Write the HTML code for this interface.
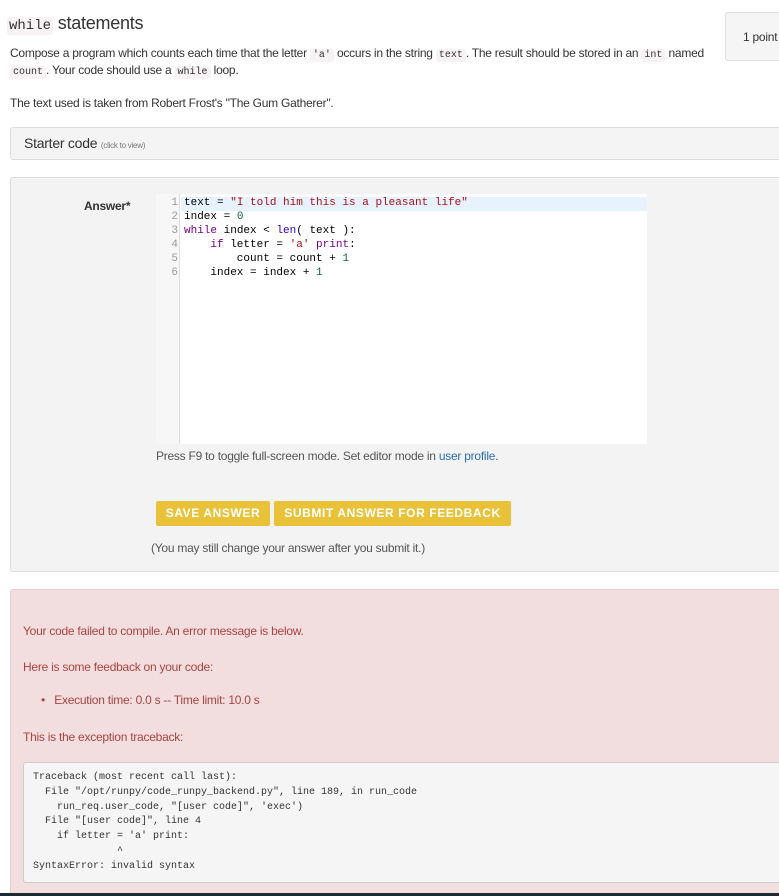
<!DOCTYPE html>
<html><head><style>
*{margin:0;padding:0;box-sizing:border-box}
html,body{width:779px;height:896px;overflow:hidden}
body{background:#fff;font-family:"Liberation Sans",sans-serif;font-size:12px;color:#333;position:relative;letter-spacing:-0.25px}
.a{position:absolute;white-space:nowrap}
code{font-family:"Liberation Mono",monospace;font-size:10px;background:#f7f2f4;color:#333;padding:1px 3px;border-radius:3px;letter-spacing:0}
.mono{font-family:"Liberation Mono",monospace;letter-spacing:0}
.ln{position:absolute;left:0;width:22px;text-align:right;color:#999}
.cl{position:absolute;left:28px;color:#000;white-space:pre}
.kw{color:#708}.st{color:#a11}.nu{color:#164}.bi{color:#30a}
.btn{position:absolute;top:501px;height:25px;background:#e9c23a;color:#fff;font-weight:bold;font-size:12px;letter-spacing:.6px;line-height:25px;text-align:center;border-radius:2px}
.tb div{height:14.8px;white-space:pre}
</style></head><body>
<div class="a" style="left:7px;top:13px;font-size:18px;color:#333"><span class="mono" style="font-size:14px;background:#f7f2f4;padding:1px 2px;border-radius:3px">while</span> statements</div>
<div class="a" style="left:725px;top:12px;width:60px;height:49px;background:#f5f5f5;border:1px solid #ddd;border-radius:3px;padding:17px 0 0 17px;font-size:12px">1 point</div>
<div class="a" style="left:10px;top:46px">Compose a program which counts each time that the letter <code>'a'</code> occurs in the string <code>text</code>. The result should be stored in an <code>int</code> named</div>
<div class="a" style="left:10px;top:63px"><code>count</code>. Your code should use a <code>while</code> loop.</div>
<div class="a" style="left:10px;top:96px">The text used is taken from Robert Frost's "The Gum Gatherer".</div>
<div class="a" style="left:10px;top:127px;width:780px;height:33px;background:#f4f4f4;border:1px solid #ddd;border-radius:3px"></div>
<div class="a" style="left:24px;top:135px;font-size:14px">Starter code <span style="font-size:8px;color:#777">(click to view)</span></div>

<div class="a" style="left:10px;top:177px;width:780px;height:395px;background:#f3f3f3;border:1px solid #ddd;border-radius:3px"></div>
<div class="a" style="left:84px;top:199px;font-weight:bold">Answer*</div>
<div class="a mono" style="left:156px;top:194px;width:491px;height:250px;background:#fff;font-size:11px">
<div class="a" style="left:0;top:0;width:24px;height:250px;background:#f7f7f7;border-right:1px solid #ddd"></div>
<div class="a" style="left:25px;top:3px;width:466px;height:14px;background:#e8f2fe"></div>
<div class="ln" style="top:3px">1</div><div class="cl" style="top:3px">text = <span class="st">"I told him this is a pleasant life"</span></div>
<div class="ln" style="top:17px">2</div><div class="cl" style="top:17px">index = <span class="nu">0</span></div>
<div class="ln" style="top:31px">3</div><div class="cl" style="top:31px"><span class="kw">while</span> index &lt; <span class="bi">len</span>( text ):</div>
<div class="ln" style="top:45px">4</div><div class="cl" style="top:45px">    <span class="kw">if</span> letter = <span class="st">'a'</span> <span class="kw">print</span>:</div>
<div class="ln" style="top:59px">5</div><div class="cl" style="top:59px">        count = count + <span class="nu">1</span></div>
<div class="ln" style="top:73px">6</div><div class="cl" style="top:73px">    index = index + <span class="nu">1</span></div>
</div>
<div class="a" style="left:156px;top:449px;color:#555">Press F9 to toggle full-screen mode. Set editor mode in <span style="color:#2a6fb0">user profile</span>.</div>
<div class="btn" style="left:156px;width:114px">SAVE ANSWER</div>
<div class="btn" style="left:274px;width:237px">SUBMIT ANSWER FOR FEEDBACK</div>
<div class="a" style="left:151px;top:541px;color:#555">(You may still change your answer after you submit it.)</div>

<div class="a" style="left:10px;top:589px;width:780px;height:320px;background:#f2dede;border:1px solid #ebccd1;border-radius:3px"></div>
<div class="a" style="left:23px;top:624px;color:#a94442">Your code failed to compile. An error message is below.</div>
<div class="a" style="left:23px;top:660px;color:#a94442">Here is some feedback on your code:</div>
<div class="a" style="left:41px;top:693px;color:#a94442">•&nbsp;&nbsp; Execution time: 0.0 s -- Time limit: 10.0 s</div>
<div class="a" style="left:23px;top:730px;color:#a94442">This is the exception traceback:</div>
<div class="a mono tb" style="left:23px;top:762px;width:770px;height:121px;background:#f5f5f5;border:1px solid #ccc;border-radius:3px;padding:9px 0 0 9px;font-size:10px;color:#333"><div>Traceback (most recent call last):</div><div>  File "/opt/runpy/code_runpy_backend.py", line 189, in run_code</div><div>    run_req.user_code, "[user code]", 'exec')</div><div>  File "[user code]", line 4</div><div>    if letter = 'a' print:</div><div>              ^</div><div>SyntaxError: invalid syntax</div></div>
<div class="a" style="left:0;top:893px;width:779px;height:3px;background:#1d2b30"></div>
</body></html>
